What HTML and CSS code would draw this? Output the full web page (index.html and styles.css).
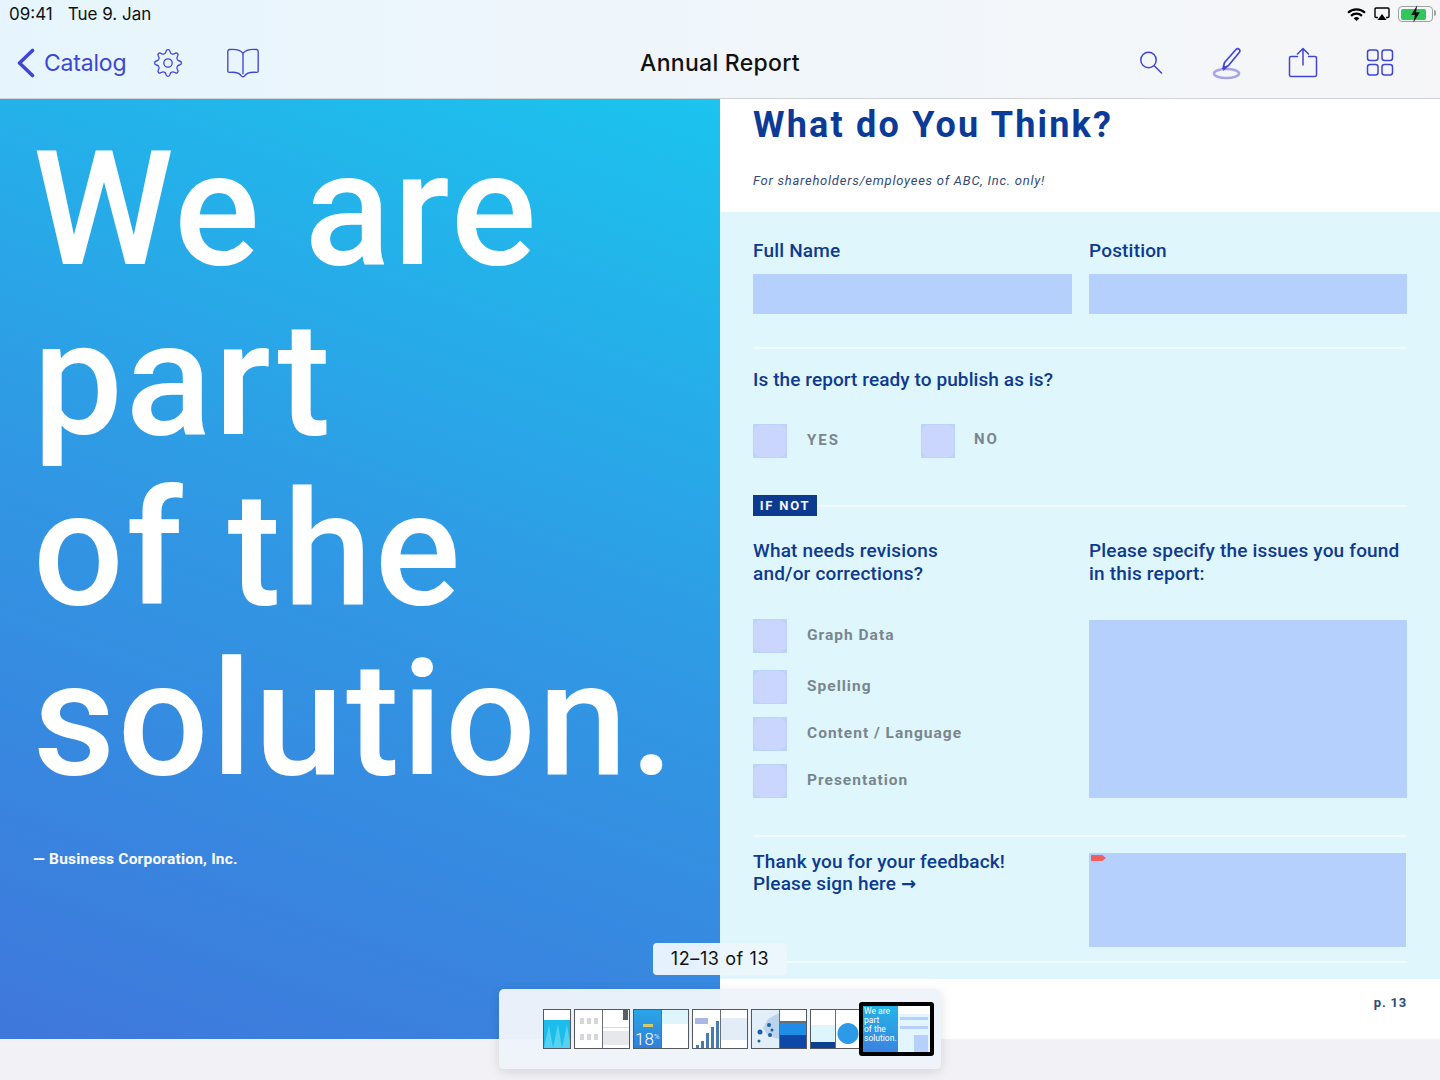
FILE: index.html
```html
<!DOCTYPE html>
<html lang="en">
<head>
    <meta charset="UTF-8">
    <meta name="viewport" content="width=device-width, initial-scale=1.0">
    <title>Annual Report</title>
    <link rel="stylesheet" href="styles.css">
</head>
<body>
    <div id="app">
        <header class="topBar">
            <div class="statusBar">
                <div class="statusTime"><span>09:41</span><span>Tue 9. Jan</span></div>
                <div class="statusIcons">
                    <svg width="19" height="15" viewBox="0 0 20 16"><path d="M1 6.200a13 13 0 0 1 18 0" fill="none" stroke="#000" stroke-width="2.400"/><path d="M4.200 9.400a8.500 8.500 0 0 1 11.600 0" fill="none" stroke="#000" stroke-width="2.400"/><path d="M10 15l-3-3a4.300 4.300 0 0 1 6 0z" fill="#000"/></svg>
                    <svg width="16" height="14" viewBox="0 0 16 14"><path d="M4 10.500H2a1 1 0 0 1-1-1V2a1 1 0 0 1 1-1h12a1 1 0 0 1 1 1v7.500a1 1 0 0 1-1 1h-2" fill="none" stroke="#000" stroke-width="1.400"/><path d="M8 7l4.500 6h-9z" fill="#000"/></svg>
                    <div class="battery"><div class="batteryFill"></div><svg class="bolt" width="11" height="18" viewBox="0 0 10 16"><path d="M6.500 0L1 9h3.500L3 16l6-9.500H5.500z" fill="#111"/></svg></div>
                </div>
            </div>
            <nav class="navBar">
                <div class="navLeft">
                    <a class="backLink">
                        <svg width="20" height="30" viewBox="0 0 20 30"><path d="M16.500 2.500L3.500 15l13 12.500" fill="none" stroke="#4045d6" stroke-width="3.600" stroke-linecap="round" stroke-linejoin="round"/></svg>
                        <span>Catalog</span>
                    </a>
                    <svg class="gearIcon" width="30" height="30" viewBox="0 0 30 30" fill="none" stroke="#4045d6" stroke-width="1.300">
                        <defs><path id="tooth" d="M11.170 5.760C12.300 5.600 12.800 4.800 13 3.500 13.200 2 14 1.600 15 1.600S16.800 2 17 3.500C17.200 4.800 17.700 5.600 18.830 5.760"/></defs>
                        <circle cx="15" cy="15" r="4.200"/>
                        <use href="#tooth"/>
                        <use href="#tooth" transform="rotate(45 15 15)"/>
                        <use href="#tooth" transform="rotate(90 15 15)"/>
                        <use href="#tooth" transform="rotate(135 15 15)"/>
                        <use href="#tooth" transform="rotate(180 15 15)"/>
                        <use href="#tooth" transform="rotate(225 15 15)"/>
                        <use href="#tooth" transform="rotate(270 15 15)"/>
                        <use href="#tooth" transform="rotate(315 15 15)"/>
                    </svg>
                    <svg class="bookIcon" width="36" height="34" viewBox="0 0 32 30" fill="none" stroke="#4045d6" stroke-width="1.200" stroke-linejoin="round"><path d="M16 6.500C14 3.500 10 2.500 4 3c-1 .1-1.500.7-1.500 1.500V22c0 .9.600 1.400 1.500 1.300 5-.4 9 .4 10.500 3.200.7 1 2.300 1 3 0 1.500-2.800 5.500-3.600 10.500-3.200.9.100 1.500-.4 1.500-1.300V4.500c0-.8-.500-1.400-1.500-1.500-6-.5-10 .5-12 3.500z"/><path d="M16 6.500V25"/></svg>
                </div>
                <h1 class="docTitle">Annual Report</h1>
                <div class="navRight">
                    <svg class="searchIcon" width="28" height="28" viewBox="0 0 28 28" fill="none" stroke="#4045d6" stroke-width="1.500" stroke-linecap="round"><circle cx="11.500" cy="11" r="7.700"/><path d="M17.300 16.700l7.200 7.300"/></svg>
                    <svg class="penIcon" width="32" height="34" viewBox="0 0 32 34" fill="none"><ellipse cx="14.500" cy="27.500" rx="12.500" ry="4.500" stroke="#a9a6e6" stroke-width="2.600"/><path d="M11 22.500l1.500-6L24 3.500c1-1 2.300-1 3.200-.2s1 2.200 0 3.200L16.500 19.500z" stroke="#4045d6" stroke-width="1.700" stroke-linejoin="round"/><path d="M11 25l1-5 3.500 1.500z" fill="#4045d6"/></svg>
                    <svg class="shareIcon" width="30" height="32" viewBox="0 0 30 32" fill="none" stroke="#4045d6" stroke-width="1.500" stroke-linecap="round" stroke-linejoin="round"><path d="M9.500 9.500H3A1.500 1.500 0 0 0 1.500 11v17A1.500 1.500 0 0 0 3 29.500h24a1.500 1.500 0 0 0 1.500-1.500V11A1.500 1.500 0 0 0 27 9.500h-6.500"/><path d="M15 18V2M9.500 7L15 1.500 20.500 7"/></svg>
                    <svg class="gridIcon" width="28" height="28" viewBox="0 0 28 28" fill="none" stroke="#4045d6" stroke-width="1.500"><rect x="1.500" y="1" width="10.500" height="10.500" rx="2.500"/><rect x="16" y="1" width="10.500" height="10.500" rx="2.500"/><rect x="1.500" y="15.500" width="10.500" height="10.500" rx="2.500"/><rect x="16" y="15.500" width="10.500" height="10.500" rx="2.500"/></svg>
                </div>
            </nav>
        </header>

        <main class="spread">
            <section class="coverPage">
                <h2 class="coverTitle">We are<br>part<br>of the<br>solution.</h2>
                <p class="coverBy">— Business Corporation, Inc.</p>
            </section>

            <section class="formPage">
                <div class="formHead">
                    <h2>What do You Think?</h2>
                    <p>For shareholders/employees of ABC, Inc. only!</p>
                </div>
                <div class="formBody">
                    <div class="twoCols nameRow">
                        <div><label class="fieldLabel">Full Name</label><div class="field textField"></div></div>
                        <div><label class="fieldLabel">Postition</label><div class="field textField"></div></div>
                    </div>
                    <div class="rule"></div>
                    <p class="question publishQ">Is the report ready to publish as is?</p>
                    <div class="yesNo">
                        <div class="option yesOption"><span class="tick"></span><span class="capsLabel">YES</span></div>
                        <div class="option noOption"><span class="tick"></span><span class="capsLabel">NO</span></div>
                    </div>
                    <div class="ifNot"><span class="ifNotTag">IF NOT</span><span class="ruleFill"></span></div>
                    <div class="twoCols issues">
                        <div>
                            <p class="question">What needs revisions<br>and/or corrections?</p>
                            <div class="issueList">
                                <div class="option graphOption"><span class="tick"></span><span class="optLabel">Graph Data</span></div>
                                <div class="option spellOption"><span class="tick"></span><span class="optLabel">Spelling</span></div>
                                <div class="option contentOption"><span class="tick"></span><span class="optLabel">Content / Language</span></div>
                                <div class="option presentOption"><span class="tick"></span><span class="optLabel">Presentation</span></div>
                            </div>
                        </div>
                        <div>
                            <p class="question">Please specify the issues you found<br>in this report:</p>
                            <div class="field issueBox"></div>
                        </div>
                    </div>
                    <div class="rule thanksRule"></div>
                    <div class="twoCols signRow">
                        <p class="question thanks">Thank you for your feedback!<br>Please sign here <span class="arrow">→</span></p>
                        <div class="field signBox"><span class="signTag"></span></div>
                    </div>
                    <div class="rule lastRule"></div>
                </div>
                <div class="formFoot">p. 13</div>
            </section>
        </main>

        <div class="pageFlag">12–13 of 13</div>

        <div class="thumbStrip">
            <div class="thumb single">
                <div class="pg t1">
                    <svg width="27" height="27" viewBox="0 0 27 27"><path d="M0 27L5 4l4 23 5-24 4 24 5-23 4 23z" fill="#54d2f2"/></svg>
                </div>
            </div>
            <div class="thumb">
                <div class="pg t2a"></div>
                <div class="pg t2b"><i></i></div>
            </div>
            <div class="thumb">
                <div class="pg t3a"><b></b><span>18<small>%</small></span></div>
                <div class="pg t3b"></div>
            </div>
            <div class="thumb">
                <div class="pg t4a">
                    <em></em>
                    <i style="height:3px"></i><i style="height:7px"></i><i style="height:15px"></i><i style="height:21px"></i><i style="height:27px"></i>
                </div>
                <div class="pg t4b"></div>
            </div>
            <div class="thumb">
                <div class="pg t5a"><svg width="27" height="37" viewBox="0 0 27 37"><path d="M27 3L16 9l-5 9 5 8 11 3z" fill="#b9d4ec"/><g fill="#1d5fa8"><circle cx="8" cy="22" r="2.500"/><circle cx="17" cy="15" r="2"/><circle cx="18" cy="25" r="2"/><circle cx="7" cy="31" r="1.500"/><circle cx="20" cy="20" r="1.500"/></g></svg></div>
                <div class="pg t5b"></div>
            </div>
            <div class="thumb narrow">
                <div class="pg t6a"></div>
                <div class="pg t6b"></div>
            </div>
            <div class="thumb current">
                <div class="miniCover">We are<br>part<br>of the<br>solution.</div>
                <div class="miniForm"><i></i><i></i><i></i></div>
            </div>
        </div>
    </div>
</body>
</html>
```

FILE: styles.css
```css
* {
    box-sizing: border-box;
}

html, body {
    margin: 0;
    padding: 0;
}

body {
    font-family: "Roboto", "Liberation Sans", sans-serif;
    background-color: #f2f2f6;
}

#app {
    position: relative;
    width: 1440px;
    height: 1080px;
    overflow: hidden;
}

p, h1, h2 {
    margin: 0;
}

/* top bar */
.topBar {
    height: 99px;
    background: linear-gradient(90deg, #e6f5fd 0%, #f0f6fb 50%, #f6f6f8 100%);
    border-bottom: 1px solid #cfd3d6;
}

.statusBar {
    height: 28px;
    padding: 4px 7px 0 9px;
    display: flex;
    justify-content: space-between;
    font-family: "Inter", sans-serif;
    font-size: 17px;
    color: #111;
}

.statusTime {
    display: flex;
    gap: 15px;
    line-height: 21px;
}

.statusIcons {
    display: flex;
    align-items: center;
    height: 20px;
    gap: 8px;
}

.battery {
    position: relative;
    width: 35px;
    height: 16px;
    border: 1.500px solid #9ba49c;
    border-radius: 4px;
    padding: 1.500px;
}

.battery::after {
    content: "";
    position: absolute;
    right: -4px;
    top: 3px;
    width: 2px;
    height: 6px;
    background-color: #9ba49c;
    border-radius: 0 2px 2px 0;
}

.batteryFill {
    width: 85%;
    height: 100%;
    background-color: #30c85c;
    border-radius: 2px;
}

.bolt {
    position: absolute;
    left: 11px;
    top: -2.500px;
}

.navBar {
    height: 70px;
    padding: 0 46px 0 16px;
    display: flex;
    align-items: center;
    justify-content: space-between;
    position: relative;
}

.navLeft {
    display: flex;
    align-items: center;
}

.backLink {
    display: flex;
    align-items: center;
    gap: 8px;
    font-family: "Inter", sans-serif;
    font-size: 23px;
    color: #4045d6;
    letter-spacing: -0.2px;
}

.gearIcon {
    margin-left: 27px;
}

.bookIcon {
    margin-left: 42px;
}

.docTitle {
    position: absolute;
    left: 0;
    right: 0;
    text-align: center;
    font-family: "Inter", sans-serif;
    font-size: 23px;
    font-weight: 500;
    color: #111;
    letter-spacing: 0.28px;
}

.navRight {
    display: flex;
    align-items: center;
}

.penIcon {
    margin-left: 47px;
}

.shareIcon {
    margin-left: 44px;
}

.gridIcon {
    margin-left: 48px;
}

/* spread */
.spread {
    display: flex;
    height: 940px;
}

.coverPage {
    width: 720px;
    padding: 0 0 0 33px;
    background: linear-gradient(200deg, #1bc4ee 0%, #3098e4 50%, #3f77db 100%);
    color: #fff;
}

.coverTitle {
    margin-top: 26px;
    font-size: 160px;
    font-weight: 500;
    line-height: 170px;
    letter-spacing: 2.500px;
}

.coverBy {
    margin-top: 44px;
    font-size: 15.500px;
    font-weight: 700;
    line-height: 20px;
    letter-spacing: 0.2px;
}

.formPage {
    width: 720px;
    display: flex;
    flex-direction: column;
    background-color: #fff;
    color: #0e3a8f;
}

.formHead {
    height: 113px;
    padding: 5px 33px 0;
}

.formHead h2 {
    font-size: 36px;
    font-weight: 700;
    line-height: 42px;
    letter-spacing: 2.200px;
    color: #0b3a97;
}

.formHead p {
    margin-top: 26px;
    font-size: 13px;
    font-style: italic;
    line-height: 18px;
    letter-spacing: 0.750px;
    color: #334a77;
}

.formBody {
    height: 767px;
    padding: 28px 33px 0;
    background-color: #dff6fd;
}

.twoCols {
    display: grid;
    grid-template-columns: 319px 318px;
    column-gap: 17px;
}

.fieldLabel {
    display: block;
    font-size: 19px;
    font-weight: 500;
    line-height: 22px;
    letter-spacing: 0.18px;
}

.field {
    background-color: #b5d0fc;
}

.textField {
    height: 40px;
    margin-top: 12px;
}

.rule {
    height: 2px;
    background-color: #f1fbfe;
}

.nameRow + .rule {
    margin-top: 33px;
}

.question {
    font-size: 19px;
    font-weight: 500;
    line-height: 23px;
    letter-spacing: 0.18px;
}

.publishQ {
    margin-top: 19px;
    letter-spacing: 0.09px;
}

.option {
    display: flex;
    align-items: center;
}

.tick {
    width: 34px;
    height: 34px;
    padding: 1px;
    background-color: #bad4fd;
}

.tick::before {
    content: "";
    display: block;
    height: 100%;
    border-radius: 7px;
    background-color: #cbd6fe;
}

.yesNo {
    display: flex;
    margin-top: 33px;
}

.yesOption {
    width: 168px;
}

.capsLabel {
    margin-left: 20px;
    font-size: 15px;
    font-weight: 700;
    letter-spacing: 2px;
    color: #7a868e;
}

.noOption .capsLabel {
    margin-top: -4px;
    margin-left: 19px;
}

.yesOption .capsLabel {
    margin-top: -2px;
}

.ifNot {
    display: flex;
    align-items: center;
    margin-top: 37px;
}

.ifNotTag {
    height: 21px;
    width: 64px;
    background-color: #0b3a8f;
    color: #f4f8ff;
    font-size: 13px;
    font-weight: 700;
    line-height: 22px;
    letter-spacing: 1.800px;
    text-align: center;
}

.ruleFill {
    flex: 1;
    height: 2px;
    background-color: #f1fbfe;
}

.issues {
    margin-top: 23px;
}

.issueList {
    margin-top: 34px;
}

.issueList .option {
    height: 34px;
}

.spellOption {
    margin-top: 17px;
}

.contentOption,
.presentOption {
    margin-top: 13px;
}

.optLabel {
    margin-left: 20px;
    margin-top: -2px;
    font-size: 15.500px;
    font-weight: 700;
    letter-spacing: 1px;
    color: #7a868e;
}

.issueBox {
    height: 178px;
    margin-top: 35px;
}

.thanksRule {
    margin-top: 37px;
}

.signRow {
    margin-top: 16px;
}

.thanks {
    line-height: 22px;
    margin-top: -2px;
}

.arrow {
    font-family: "DejaVu Sans", sans-serif;
    font-weight: 700;
    font-size: 18px;
    line-height: 0;
    letter-spacing: 0;
}

.signBox {
    position: relative;
    width: 317px;
    height: 94px;
}

.signTag {
    position: absolute;
    left: 2px;
    top: 2px;
    width: 15px;
    height: 6px;
    background-color: #ef6161;
    clip-path: polygon(0 0, 75% 0, 100% 50%, 75% 100%, 0 100%);
}

.lastRule {
    margin-top: 14px;
}

.formFoot {
    flex: 1;
    padding: 16px 33px 0 0;
    text-align: right;
    font-size: 13px;
    font-weight: 700;
    letter-spacing: 0.800px;
    color: #334a77;
}

/* overlays */
.pageFlag {
    position: absolute;
    left: 653px;
    top: 943px;
    width: 134px;
    height: 32px;
    background-color: rgba(236, 246, 253, 0.96);
    border-radius: 4px;
    text-align: center;
    font-family: "Inter", sans-serif;
    font-size: 18px;
    line-height: 31px;
    color: #111;
    letter-spacing: 0.600px;
}

.thumbStrip {
    position: absolute;
    left: 499px;
    top: 989px;
    width: 442px;
    height: 80px;
    padding-left: 44px;
    display: flex;
    align-items: center;
    gap: 3px;
    background-color: rgba(238, 244, 250, 0.97);
    border-radius: 5px;
    box-shadow: 0 3px 12px rgba(0, 0, 0, 0.12);
}

.thumb {
    display: flex;
    height: 40px;
    width: 56px;
    border: 1px solid #55585c;
    margin-top: -1px;
    background-color: #fff;
    overflow: hidden;
}

.thumb.single {
    width: 28px;
}

.thumb.narrow {
    width: 50px;
    border-right: 0;
}

.pg {
    flex: 1;
    position: relative;
    overflow: hidden;
}

.pg + .pg {
    border-left: 1px solid #6b6e72;
}

.t1 {
    background: linear-gradient(#fff 0 27%, #1cbdec 27%);
}

.t1 svg {
    position: absolute;
    left: 0;
    bottom: 0;
}

.t2a {
    background:
        linear-gradient(#d5d7da, #d5d7da) 5px 8px / 4px 6px no-repeat,
        linear-gradient(#d5d7da, #d5d7da) 12px 8px / 4px 6px no-repeat,
        linear-gradient(#d5d7da, #d5d7da) 19px 8px / 4px 6px no-repeat,
        linear-gradient(#d5d7da, #d5d7da) 5px 24px / 4px 6px no-repeat,
        linear-gradient(#d5d7da, #d5d7da) 12px 24px / 4px 6px no-repeat,
        linear-gradient(#d5d7da, #d5d7da) 19px 24px / 4px 6px no-repeat;
}

.t2b {
    background: linear-gradient(#fff 0 45%, #d9dbde 45% 47%, #fff 47% 55%, #e6e8eb 55% 92%, #fff 92%);
}

.t2b i {
    position: absolute;
    right: 1px;
    top: 0;
    width: 5px;
    height: 10px;
    background-color: #5c6066;
}

.t3a {
    background: linear-gradient(#2aa5e8, #2f7fd8);
    color: #fff;
}

.t3a b {
    position: absolute;
    left: 9px;
    top: 14px;
    width: 10px;
    height: 3px;
    background-color: #d8c96a;
}

.t3a span {
    position: absolute;
    left: 1px;
    bottom: 0;
    font-size: 17px;
    line-height: 18px;
    font-weight: 300;
    white-space: nowrap;
}

.t3a small {
    font-size: 8px;
    vertical-align: 6px;
}

.t3b {
    background: linear-gradient(#def5fc 0 38%, #fff 38%);
}

.t4a {
    display: flex;
    align-items: flex-end;
    justify-content: flex-end;
    gap: 2px;
    padding-right: 1px;
}

.t4a em {
    position: absolute;
    left: 2px;
    top: 8px;
    width: 13px;
    height: 6px;
    background-color: #aab8e6;
}

.t4a i {
    width: 3px;
    background-color: #4a7bb0;
}

.t4b {
    background: linear-gradient(#fff 0 20%, #e3edf8 20% 80%, #fff 80%);
}

.t5a {
    background-color: #e3eff8;
}

.t5a svg {
    display: block;
}

.t5b {
    background: linear-gradient(#fff 0 28%, #6b6e72 28% 33%, #1d8de8 33% 65%, #0d47a8 65%);
}

.t6a {
    background: linear-gradient(#fff 0 40%, #def5fc 40% 85%, #0d3f93 85%);
}

.t6b {
    background: radial-gradient(circle at 50% 62%, #2c9ae6 0 10px, #fff 11px);
}

.thumb.current {
    width: 75px;
    height: 54px;
    margin: -1px 0 0 -4px;
    border: 4px solid #000;
    border-radius: 3px;
    position: relative;
}

.miniCover {
    width: 35px;
    padding: 1px 0 0 1px;
    background: linear-gradient(190deg, #22b5ea, #3c80de);
    color: #fff;
    font-size: 8.500px;
    line-height: 9px;
    white-space: nowrap;
}

.miniForm {
    flex: 1;
    padding: 11px 2px 0;
    background: linear-gradient(#fff 0 8px, #e3f6fd 8px);
}

.miniForm i {
    display: block;
    height: 3px;
    margin-bottom: 6px;
    background-color: #b5d0fc;
}

.miniForm i:last-child {
    width: 50%;
    margin-left: 50%;
    height: 17px;
}
```
